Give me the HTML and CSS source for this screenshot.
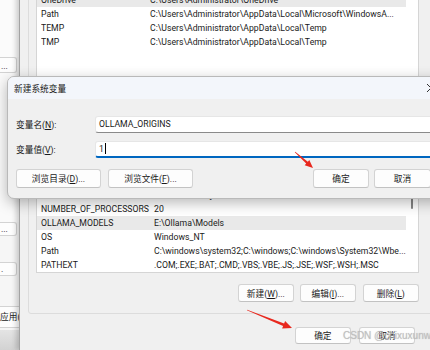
FILE: index.html
```html
<!DOCTYPE html>
<html>
<head>
    <meta charset="utf-8">
    <title>新建系统变量</title>
    <link rel="stylesheet" href="styles.css">
</head>
<body>
    <div class="desk">
        <!-- 左边露出的系统属性窗口 -->
        <div class="side">
            <div class="side-top"></div>
            <div class="side-btn b1">...</div>
            <div class="side-gap"></div>
            <div class="side-btn b2">...</div>
            <div class="side-btn b3">.</div>
            <div class="side-btn b4">应用(A)</div>
            <div class="side-foot"></div>
        </div>

        <!-- 环境变量窗口 -->
        <div class="envwin">
            <div class="group">
                <div class="group-title">Administrator 的用户变量(U)</div>
                <div class="list user">
                    <div class="rows">
                        <div class="row sel"><span class="name">OneDrive</span><span class="val">C:\Users\Administrator\OneDrive</span></div>
                        <div class="row"><span class="name">Path</span><span class="val">C:\Users\Administrator\AppData\Local\Microsoft\WindowsA...</span></div>
                        <div class="row"><span class="name">TEMP</span><span class="val">C:\Users\Administrator\AppData\Local\Temp</span></div>
                        <div class="row"><span class="name">TMP</span><span class="val">C:\Users\Administrator\AppData\Local\Temp</span></div>
                    </div>
                    <div class="vbar"></div>
                </div>
                <div class="btns">
                    <button>新建(<u>N</u>)...</button>
                    <button>编辑(<u>E</u>)...</button>
                    <button>删除(<u>D</u>)</button>
                </div>
            </div>

            <div class="group sys">
                <div class="group-title">系统变量(S)</div>
                <div class="list">
                    <div class="rows">
                        <div class="row"><span class="name">ComSpec</span><span class="val">C:\windows\system32\cmd.exe</span></div>
                        <div class="row"><span class="name">DriverData</span><span class="val">C:\Windows\System32\Drivers\DriverData</span></div>
                        <div class="row"><span class="name">NUMBER_OF_PROCESSORS</span><span class="val">20</span></div>
                        <div class="row sel"><span class="name">OLLAMA_MODELS</span><span class="val">E:\Ollama\Models</span></div>
                        <div class="row"><span class="name">OS</span><span class="val">Windows_NT</span></div>
                        <div class="row"><span class="name">Path</span><span class="val">C:\windows\system32;C:\windows;C:\windows\System32\Wbe...</span></div>
                        <div class="row"><span class="name">PATHEXT</span><span class="val">.COM;.EXE;.BAT;.CMD;.VBS;.VBE;.JS;.JSE;.WSF;.WSH;.MSC</span></div>
                    </div>
                    <div class="vbar"><div class="thumb"></div></div>
                </div>
                <div class="btns">
                    <button>新建(<u>W</u>)...</button>
                    <button>编辑(<u>I</u>)...</button>
                    <button>删除(<u>L</u>)</button>
                </div>
            </div>

            <div class="win-btns">
                <button>确定</button>
                <button>取消</button>
            </div>
        </div>
    </div>

    <!-- 新建系统变量 对话框 -->
    <div class="dialog">
        <div class="titlebar">
            <span class="title">新建系统变量</span>
            <span class="close">
                <svg width="10" height="10" viewBox="0 0 10 10"><path d="M1 1L9 9M9 1L1 9" stroke="#333" stroke-width="1"/></svg>
            </span>
        </div>
        <div class="dlg-body">
            <div class="field">
                <label>变量名(<u>N</u>):</label>
                <div class="input">OLLAMA_ORIGINS</div>
            </div>
            <div class="field">
                <label>变量值(<u>V</u>):</label>
                <div class="input focus">1<span class="caret"></span></div>
            </div>
            <div class="dlg-btns">
                <button class="wide">浏览目录(<u>D</u>)...</button>
                <button class="wide">浏览文件(<u>F</u>)...</button>
                <span class="spacer"></span>
                <button>确定</button>
                <button>取消</button>
            </div>
        </div>
    </div>

    <!-- 红色箭头 -->
    <svg class="arrows" width="430" height="350" viewBox="0 0 430 350">
        <polygon fill="#e8281e" points="295.2,151.8 307.8,161.8 309.3,160.1 313,168 304.7,165.3 306.2,163.6 294.8,152.2"/>
        <polygon fill="#e8281e" points="247.1,309.7 284.1,323.5 285.1,321 292,328 282.1,328.4 283.1,325.9 246.9,310.3"/>
    </svg>

    <div class="mark">CSDN @chixuxunwl</div>
</body>
</html>
```

FILE: styles.css
```css
body {
    margin: 0;
    width: 430px;
    height: 350px;
    overflow: hidden;
    position: relative;
    background: #f0f0f0;
    font-family: Roboto, "Noto Sans CJK SC", sans-serif;
    font-size: 8.7px;
    color: #1a1a1a;
}
button {
    font: inherit;
    color: #1a1a1a;
    background: #fdfdfd;
    border: 1px solid #d3d3d3;
    border-bottom-color: #c2c2c2;
    border-radius: 3px;
    padding: 0;
    margin: 0;
    width: 56px;
    white-space: nowrap;
}
.desk {
    display: flex;
    height: 350px;
}

/* 左边的窗口 */
.side {
    width: 19px;
    flex: none;
    background: #f6f6f6;
    display: flex;
    flex-direction: column;
    overflow: hidden;
}
.side-top {
    height: 57px;
    background: #fbfbfb;
}
.side-btn {
    height: 14px;
    width: 17px;
    box-sizing: border-box;
    border: 1px solid #d3d3d3;
    border-left: 0;
    border-radius: 0 3px 3px 0;
    background: #fdfdfd;
    line-height: 12px;
    padding-left: 1px;
    white-space: nowrap;
    overflow: hidden;
}
.b1 {
    height: 16px;
    line-height: 16px;
}
.side-gap {
    height: 149px;
    background: #fafafa;
}
.b3 {
    margin-top: 26px;
}
.b4 {
    margin-top: 30px;
    height: 22px;
    line-height: 20px;
    width: 40px;
    padding: 0;
    border-radius: 0;
    border-right: 0;
}
.side-foot {
    margin-top: auto;
    height: 20px;
    background: linear-gradient(#e4e4e4, #d2d2d2);
}

/* 环境变量窗口 */
.envwin {
    flex: 1;
    border-left: 1px solid #a3a3a3;
    box-shadow: -3px 0 5px rgba(0,0,0,0.18);
    background: #f0f0f0;
    margin-top: -28px;
    padding: 0 22px 0 0;
    display: flex;
    flex-direction: column;
}
.group {
    margin: 0 -19px 0 8px;
    border: 1px solid #dcdcdc;
    border-radius: 3px;
    padding: 0 14px 10px 7px;
}
.group.sys {
    margin-top: 6px;
    padding-bottom: 11px;
}
.group-title {
    height: 19px;
    line-height: 19px;
}
.list {
    height: 115px;
    box-sizing: border-box;
    background: #fff;
    border: 1px solid #d5d5d5;
    display: flex;
}
.sys .list {
    height: 100px;
}
.rows {
    flex: 1;
    overflow: hidden;
}
.vbar {
    width: 12px;
    flex: none;
    position: relative;
}
.thumb {
    position: absolute;
    left: 5px;
    top: 24px;
    width: 2px;
    height: 11px;
    border-radius: 1px;
    background: #858585;
}
.row {
    height: 14px;
    line-height: 14px;
    padding-left: 4px;
    display: flex;
    white-space: nowrap;
    overflow: hidden;
}
.row.sel {
    background: #e9e9e9;
}
.name {
    width: 109px;
    flex: none;
    overflow: hidden;
}
.sys .name {
    width: 113px;
}
.btns {
    display: flex;
    justify-content: flex-end;
    gap: 6px;
    margin-top: 11px;
}
.btns button {
    height: 18px;
}
.btns button:last-child {
    margin-left: 1px;
}
.win-btns {
    display: flex;
    justify-content: flex-end;
    gap: 8px;
    margin-top: 13px;
}
.win-btns button {
    height: 17px;
}

/* 对话框 */
.dialog {
    position: absolute;
    left: 7px;
    top: 76px;
    width: 446px;
    border: 1px solid #b9b9b9;
    border-radius: 7px;
    background: #f0f0f0;
    box-shadow: 0 4px 14px rgba(0,0,0,0.28);
    overflow: hidden;
}
.titlebar {
    height: 22px;
    background: #f3f6fb;
    display: flex;
    align-items: center;
    padding-left: 6px;
}
.close {
    margin-left: auto;
    width: 46px;
    display: flex;
    justify-content: center;
}
.dlg-body {
    padding: 17px 0 10px 8px;
}
.field {
    display: flex;
    align-items: center;
    height: 17px;
    margin-bottom: 8px;
}
.field label {
    width: 79px;
}
.input {
    flex: 1;
    height: 17px;
    box-sizing: border-box;
    background: #fff;
    border: 1px solid #e6e6e6;
    border-bottom-color: #8a8a8a;
    border-radius: 3px;
    padding-left: 3px;
    line-height: 15px;
}
.input.focus {
    border-bottom: 2px solid #0067c0;
}
.caret {
    display: inline-block;
    width: 1px;
    height: 11px;
    background: #000;
    vertical-align: -2px;
    margin-left: 1px;
}
.dlg-btns {
    display: flex;
    gap: 7px;
    margin-top: 11px;
    padding-right: 23px;
}
.dlg-btns button {
    height: 19px;
}
.dlg-btns button.wide {
    width: 85px;
}
.dlg-btns button:last-child {
    margin-left: -2px;
    width: 57px;
}
.spacer {
    flex: 1;
}

.arrows {
    position: absolute;
    left: 0;
    top: 0;
    pointer-events: none;
}
.mark {
    position: absolute;
    left: 343px;
    top: 330px;
    white-space: nowrap;
    font-family: "Liberation Sans", sans-serif;
    font-size: 10px;
    color: rgba(190,190,190,0.9);
    text-shadow: 0 0 1px rgba(120,120,120,0.4);
    pointer-events: none;
}
```
